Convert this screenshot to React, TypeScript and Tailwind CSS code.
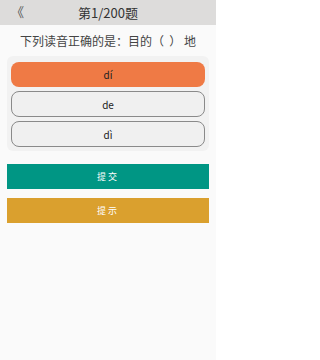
export default function App() {
  const font = { fontFamily: '"Noto Sans CJK SC", "Noto Sans", sans-serif' };
  return (
    <div className="w-[216px] h-[360px] bg-[#fafafa] flex flex-col" style={font}>
      <div className="h-[25px] bg-[#dddcdb] flex items-center relative">
        <span className="absolute left-[11px] top-[3px] text-[13px] text-[#555] leading-[18px]">《</span>
        <div className="flex-1 text-center text-[13px] text-[#333] leading-[25px]">第1/200题</div>
      </div>
      <div className="h-[31px] flex items-center justify-center text-[12px] text-[#444] whitespace-pre">
        下列读音正确的是：目的（  ） 地
      </div>
      <div className="mx-[7px] bg-[#f2f2f2] rounded-[6px] px-[4px] pt-[6px] pb-[4px] flex flex-col gap-[4px]">
        <div className="h-[25px] rounded-[8px] bg-[#ef7a45] flex items-center justify-center text-[10px] text-[#222]">dí</div>
        <div className="h-[26px] rounded-[8px] bg-[#f0f0f0] border border-[#8a8a8a] flex items-center justify-center text-[10px] text-[#222]">de</div>
        <div className="h-[26px] rounded-[8px] bg-[#f0f0f0] border border-[#8a8a8a] flex items-center justify-center text-[10px] text-[#222]">dì</div>
      </div>
      <div className="mx-[7px] mt-[13px] h-[25px] bg-[#009684] flex items-center justify-center text-[9px] text-white tracking-[2px]">提交</div>
      <div className="mx-[7px] mt-[9px] h-[25px] bg-[#daa02e] flex items-center justify-center text-[9px] text-white tracking-[2px]">提示</div>
    </div>
  );
}
